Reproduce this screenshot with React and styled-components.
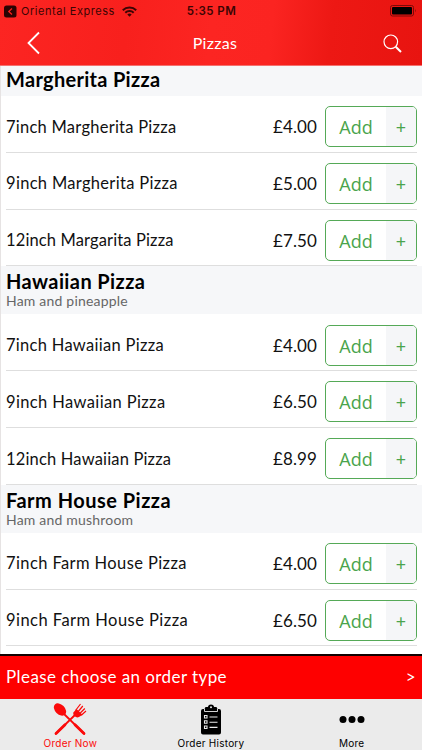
import React from "react";
import styled, { createGlobalStyle } from "styled-components";

const GlobalStyle = createGlobalStyle`
  * {
    box-sizing: border-box;
  }
  body {
    margin: 0;
    background-color: #fff;
    color: #111;
    font-family: Lato, "Open Sans", sans-serif;
    overflow: hidden;
  }
`;

const Screen = styled.div`
  display: flex;
  flex-direction: column;
  width: 422px;
  height: 750px;
  overflow: hidden;
`;
const Header = styled.header`
  flex: none;
  height: 66px;
  background: linear-gradient(
    96deg,
    #fc2522 0%,
    #f8201d 30%,
    #fc2522 50%,
    #fb2421 64%,
    #ed1814 78%,
    #e81410 100%
  );
  border-bottom: 1px solid #f4716f;
`;
const StatusBar = styled.div`
  display: grid;
  grid-template-columns: 1fr auto 1fr;
  align-items: center;
  height: 22px;
  padding: 0 5px 0 4px;
  color: #3b0504;
  font-family: Inter, sans-serif;
`;
const BackToApp = styled.div`
  display: flex;
  align-items: center;
  font-size: 11px;
`;
const AppName = styled.span`
  width: 93px;
  margin: 0 8px 0 4px;
  letter-spacing: 0.54px;
  white-space: nowrap;
`;
const Clock = styled.span`
  padding-left: 2px;
  font-size: 11.5px;
  font-weight: 600;
  letter-spacing: 0.45px;
`;
const Battery = styled.svg`
  justify-self: end;
`;
const NavBar = styled.nav`
  display: grid;
  grid-template-columns: 60px 1fr 60px;
  align-items: center;
  height: 42px;
`;
const NavButton = styled.button`
  display: flex;
  justify-content: ${({ $end }) => ($end ? "flex-end" : "flex-start")};
  padding: 0;
  padding-left: ${({ $end }) => ($end ? 0 : "26px")};
  padding-right: ${({ $end }) => ($end ? "20px" : 0)};
  border: none;
  background: none;
`;
const NavTitle = styled.h1`
  margin: 0;
  padding: 0 0 1px 8px;
  color: #fff;
  font-size: 16px;
  font-weight: 400;
  letter-spacing: 0.3px;
  text-align: center;
`;

const Menu = styled.main`
  flex: none;
  height: 588px;
  border-left: 1px solid #e6e3e3;
  overflow: hidden;
`;
const SectionHead = styled.div`
  height: ${({ $tall }) => ($tall ? "48px" : "30px")};
  padding: ${({ $tall }) => ($tall ? "3px" : "1px")} 5px 0;
  background-color: #f6f7f9;
`;
const SectionTitle = styled.h2`
  width: max-content;
  margin: 0;
  color: #000;
  font-size: 20px;
  font-weight: 700;
  line-height: 24px;
  letter-spacing: ${({ $spacing }) => $spacing}px;
`;
const SectionNote = styled.p`
  width: max-content;
  margin: 0;
  color: #666;
  font-size: 14px;
  line-height: 15px;
  letter-spacing: 0.2px;
`;
const Item = styled.div`
  display: flex;
  align-items: center;
  height: 56.8px;
  margin: 0 5px;
  padding-top: 5.6px;
  border-bottom: 1px solid #dedede;
`;
const ItemName = styled.span`
  flex: 1;
  font-size: 16.5px;
  letter-spacing: ${({ $spacing }) => $spacing}px;
`;
const Price = styled.span`
  margin-right: 8px;
  font-size: 17px;
  letter-spacing: 0.1px;
`;
const AddButton = styled.button`
  display: flex;
  width: 92px;
  height: 41px;
  padding: 0;
  border: 1px solid #55a957;
  border-radius: 5px;
  background-color: #fff;
  color: #4aa44c;
  font-family: "Noto Sans", sans-serif;
  overflow: hidden;
`;
const AddLabel = styled.span`
  flex: 1;
  font-family: "Open Sans", sans-serif;
  font-size: 18px;
  font-weight: 400;
  line-height: 40px;
`;
const Plus = styled.span`
  width: 30px;
  background-color: #f5f6f8;
  font-size: 18px;
  line-height: 41px;
`;

const OrderType = styled.button`
  display: flex;
  flex: none;
  align-items: center;
  justify-content: space-between;
  height: 45px;
  padding: 0 6px 2px;
  border: none;
  border-top: 2px solid #110000;
  background-color: #fe0000;
  color: #fff;
  font-family: Lato, sans-serif;
  font-size: 17px;
  letter-spacing: 0.42px;
`;
const TabBar = styled.footer`
  display: grid;
  flex: 1;
  grid-template-columns: repeat(3, 1fr);
  background-color: #ebebeb;
`;
const Tab = styled.div`
  display: flex;
  flex-direction: column;
  align-items: center;
  padding-top: 4px;
  color: ${({ $active }) => ($active ? "#fb0a0a" : "#000")};
  font-family: Inter, sans-serif;
  font-size: 10px;
  line-height: 12px;
  letter-spacing: 0.25px;

  svg {
    margin-bottom: 1px;
  }
`;

// spacing is the letter spacing of the title and of its item names
const sections = [
  {
    title: "Margherita Pizza",
    spacing: 0.3,
    items: [
      { name: "7inch Margherita Pizza", price: "£4.00", spacing: 0.25 },
      { name: "9inch Margherita Pizza", price: "£5.00", spacing: 0.31 },
      { name: "12inch Margarita Pizza", price: "£7.50", spacing: 0.13 },
    ],
  },
  {
    title: "Hawaiian Pizza",
    note: "Ham and pineapple",
    spacing: 0.4,
    items: [
      { name: "7inch Hawaiian Pizza", price: "£4.00", spacing: 0.29 },
      { name: "9inch Hawaiian Pizza", price: "£6.50", spacing: 0.37 },
      { name: "12inch Hawaiian Pizza", price: "£8.99", spacing: 0.17 },
    ],
  },
  {
    title: "Farm House Pizza",
    note: "Ham and mushroom",
    spacing: 0.49,
    items: [
      { name: "7inch Farm House Pizza", price: "£4.00", spacing: 0.4 },
      { name: "9inch Farm House Pizza", price: "£6.50", spacing: 0.46 },
    ],
  },
];

function CutleryIcon() {
  return (
    <svg width="34" height="33" viewBox="0 0 34 33" fill="currentColor">
      <ellipse cx="7" cy="6.5" rx="7.200" ry="4.900" transform="rotate(45 7 6.500)" />
      <g fill="none" stroke="currentColor" strokeLinecap="round">
        <path d="M10 10 31 30.500M3 30.500 24 10" strokeWidth="1.800" />
        <path d="m22 21.700 9 8.800M12 21.700 3 30.500" strokeWidth="2.800" />
      </g>
      <path d="m20.300 9.500 3.200-3.500 6 5.700-3.500 2.300c-1.600.8-3.200.3-4.300-.700-1.100-1.100-1.700-2.400-1.400-3.800z" />
      <path
        d="m22.500 7.500 5-6.500M24.800 9l5-6M26.800 10.500l5-5M28.300 12.300 33 8"
        fill="none"
        stroke="currentColor"
        strokeWidth="1.200"
      />
    </svg>
  );
}

function ClipboardIcon() {
  return (
    <svg width="22" height="33" viewBox="0 0 22 33">
      <path d="M3 6h1.500l1-2h2.300a3.300 3.300 0 0 1 6.400 0h2.300l1 2H19a2 2 0 0 1 2 2v21.500a2 2 0 0 1-2 2H3a2 2 0 0 1-2-2V8a2 2 0 0 1 2-2z" />
      <path d="M4.500 6v2.500h13V6" fill="none" stroke="#ebebeb" strokeWidth="0.900" />
      <circle cx="11" cy="4.300" r="1" fill="#ebebeb" />
      <path
        d="M4.500 12.500H7V15H4.500zM4.500 17.700H7v2.500H4.500zM4.500 23H7v2.500H4.500zM9.500 14h8M9.500 19.200h8M9.500 24.400h8"
        fill="none"
        stroke="#ebebeb"
        strokeWidth="1.100"
      />
    </svg>
  );
}

function MoreIcon() {
  return (
    <svg width="26" height="33" viewBox="0 0 26 33">
      <circle cx="4" cy="16.500" r="3.500" />
      <circle cx="13" cy="16.500" r="3.500" />
      <circle cx="22" cy="16.500" r="3.500" />
    </svg>
  );
}

export default function App() {
  return (
    <>
      <GlobalStyle />
      <Screen>
        <Header>
          <StatusBar>
            <BackToApp>
              <svg width="13" height="13" viewBox="0 0 13 13">
                <rect y="0.5" width="12.500" height="12" rx="2.500" fill="#2a0303" />
                <path d="M8 3.500 4.800 6.500 8 9.500" fill="none" stroke="#f8201d" strokeWidth="1.300" />
              </svg>
              <AppName>Oriental Express</AppName>
              <svg width="15" height="11" viewBox="0 0 15 11">
                <g fill="none" stroke="#3b0504" strokeWidth="2">
                  <path d="M.8 4.200a9.500 9.500 0 0 1 13.400 0" />
                  <path d="M3.300 6.800a6 6 0 0 1 8.400 0" />
                </g>
                <path d="M5.300 8.500a3.200 3.200 0 0 1 4.400 0L7.500 10.800z" fill="#3b0504" />
              </svg>
            </BackToApp>
            <Clock>5:35 PM</Clock>
            <Battery width="27" height="12" viewBox="0 0 27 12">
              <rect x="0.500" y="0.500" width="23" height="10.500" rx="2" fill="none" stroke="#7b0a08" />
              <rect x="2" y="2" width="20" height="7.500" rx="1" />
              <path d="M25 4v3.500q1.500-1.700 0-3.500z" fill="#7b0a08" />
            </Battery>
          </StatusBar>
          <NavBar>
            <NavButton aria-label="Back">
              <svg width="15" height="24" viewBox="0 0 15 24">
                <path d="M13 1.500 2.500 12 13 22.500" fill="none" stroke="#fff" strokeWidth="1.800" />
              </svg>
            </NavButton>
            <NavTitle>Pizzas</NavTitle>
            <NavButton aria-label="Search" $end>
              <svg width="19" height="19" viewBox="0 0 19 19" fill="none" stroke="#fff">
                <circle cx="7.800" cy="7.800" r="6.800" strokeWidth="1.200" />
                <path d="m12.700 12.700 5.300 5.300" strokeWidth="2" />
              </svg>
            </NavButton>
          </NavBar>
        </Header>

        <Menu>
          {sections.map((section) => (
            <section key={section.title}>
              <SectionHead $tall={!!section.note}>
                <SectionTitle $spacing={section.spacing}>{section.title}</SectionTitle>
                {section.note && <SectionNote>{section.note}</SectionNote>}
              </SectionHead>
              {section.items.map((item) => (
                <Item key={item.name}>
                  <ItemName $spacing={item.spacing}>{item.name}</ItemName>
                  <Price>{item.price}</Price>
                  <AddButton>
                    <AddLabel>Add</AddLabel>
                    <Plus>+</Plus>
                  </AddButton>
                </Item>
              ))}
            </section>
          ))}
        </Menu>

        <OrderType>
          <span>Please choose an order type</span>
          <span>&gt;</span>
        </OrderType>
        <TabBar>
          <Tab $active>
            <CutleryIcon />
            Order Now
          </Tab>
          <Tab>
            <ClipboardIcon />
            Order History
          </Tab>
          <Tab>
            <MoreIcon />
            More
          </Tab>
        </TabBar>
      </Screen>
    </>
  );
}
